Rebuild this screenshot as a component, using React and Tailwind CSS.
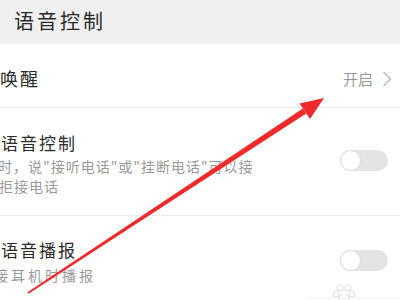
import React from "react";

const font = { fontFamily: '"Noto Sans CJK SC", "Noto Sans", sans-serif' };

function Toggle() {
  return (
    <div className="relative w-[48px] h-[21px] rounded-full bg-[#e4e4e4]">
      <div className="absolute left-0 top-0 w-[21px] h-[21px] rounded-full bg-white border border-[#dcdcdc]" />
    </div>
  );
}

function Arrow() {
  return (
    <svg
      className="absolute left-0 top-0 pointer-events-none"
      width="400"
      height="300"
      viewBox="0 0 400 300"
    >
      <polygon
        points="27.5,292.2 28.6,293.8 306.2,113.6 302.9,108.6"
        fill="#f02a2a"
      />
      <polygon points="324,98 299.5,103.4 310,119" fill="#f02a2a" />
    </svg>
  );
}

function Watermark() {
  return (
    <svg
      className="absolute left-[300px] top-[282px] pointer-events-none"
      width="100"
      height="18"
      viewBox="0 0 100 18"
    >
      <g fill="none" stroke="#e2e2e2" strokeWidth="1.2">
        <circle cx="40" cy="6" r="3" />
        <circle cx="48" cy="6" r="3" />
        <circle cx="36" cy="12" r="3" />
        <circle cx="52" cy="12" r="3" />
        <ellipse cx="44" cy="16" rx="5" ry="3.5" />
      </g>
      <line x1="8" y1="16" x2="100" y2="16" stroke="#eeeeee" strokeWidth="1" />
    </svg>
  );
}

export default function App() {
  return (
    <div className="relative w-[400px] h-[300px] overflow-hidden bg-white" style={font}>
      {/* header */}
      <div className="h-[44px] bg-[#f0f0f0] flex items-center pl-[14px] pb-[2px]">
        <span className="text-[20px] leading-[24px] tracking-[3px] text-[#2a2a2a]">
          语音控制
        </span>
      </div>

      {/* wake row */}
      <div className="h-[64px] flex items-center border-b border-[#ececec] pt-[4px] pr-[8px]">
        <div className="flex-1 overflow-hidden">
          <span className="block -ml-[40px] text-[18px] leading-[22px] tracking-[2px] text-[#2a2a2a] whitespace-nowrap">
            语音唤醒
          </span>
        </div>
        <div className="flex items-center gap-[9px] pt-[3px]">
          <span className="text-[15px] leading-[18px] text-[#999999]">开启</span>
          <svg width="10" height="16" viewBox="0 0 10 16">
            <path d="M1.5 1 L8.5 8 L1.5 15" fill="none" stroke="#b8b8b8" strokeWidth="1.3" />
          </svg>
        </div>
      </div>

      {/* voice control row */}
      <div className="h-[108px] flex items-start border-b border-[#ececec] pr-[12px]">
        <div className="flex-1 overflow-hidden pt-[24px]">
          <span className="block -ml-[37px] text-[17px] leading-[21px] tracking-[2px] text-[#2a2a2a] whitespace-nowrap">
            来电语音控制
          </span>
          <span className="block mt-[3px] -ml-[32px] text-[14px] leading-[20px] tracking-[1px] text-[#999999] whitespace-nowrap">
            来电时，说"接听电话"或"挂断电话"可以接
          </span>
          <span className="block -ml-[31px] text-[14px] leading-[20px] tracking-[1px] text-[#999999] whitespace-nowrap">
            听或拒接电话
          </span>
        </div>
        <div className="mt-[42px]">
          <Toggle />
        </div>
      </div>

      {/* voice broadcast row */}
      <div className="flex items-start pr-[12px]">
        <div className="flex-1 overflow-hidden pt-[23px]">
          <span className="block -ml-[37px] text-[17px] leading-[21px] tracking-[2px] text-[#2a2a2a] whitespace-nowrap">
            来电语音播报
          </span>
          <span className="block mt-[5px] -ml-[23px] text-[14px] leading-[20px] tracking-[3px] text-[#999999] whitespace-nowrap">
            连接耳机时播报
          </span>
        </div>
        <div className="mt-[34px]">
          <Toggle />
        </div>
      </div>

      <Watermark />
      <Arrow />
    </div>
  );
}
